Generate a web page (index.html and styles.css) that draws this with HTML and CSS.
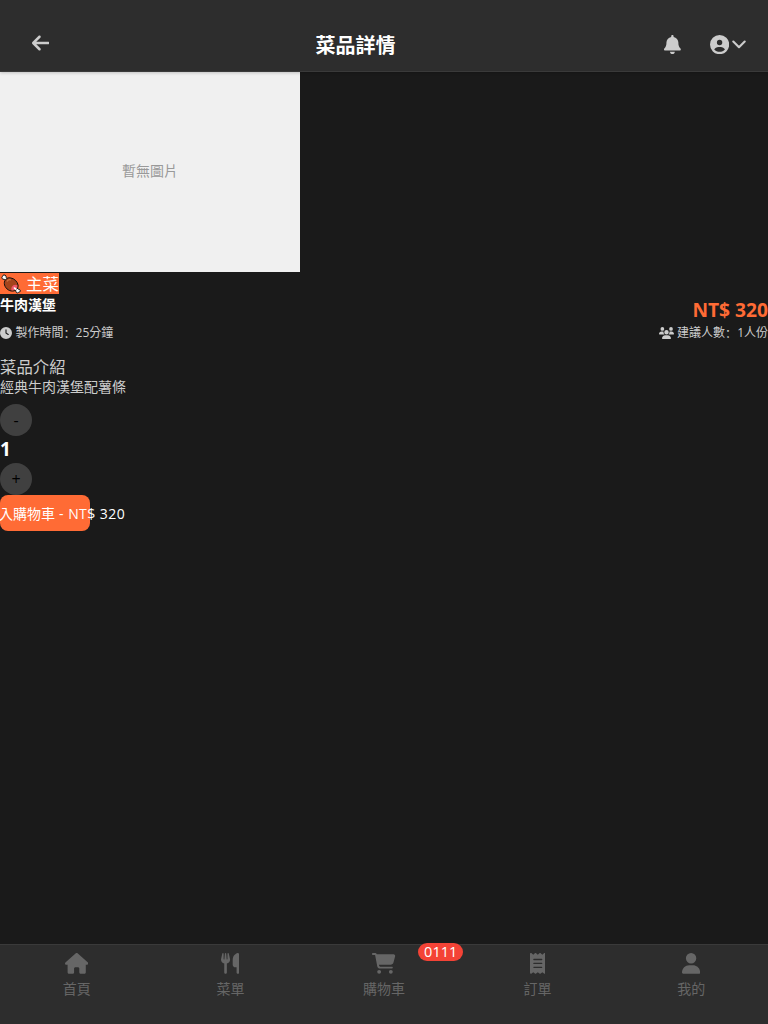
FILE: index.html
```html
<!DOCTYPE html>
<html lang="zh-Hant">
<head>
<meta charset="utf-8">
<title>菜品詳情</title>
<link rel="stylesheet" href="styles.css">
</head>
<body>
<div class="app">
  <header class="topbar">
    <svg class="back" viewBox="0 0 448 512"><path d="M9.4 233.4c-12.5 12.5-12.5 32.8 0 45.3l160 160c12.5 12.5 32.8 12.5 45.3 0s12.5-32.8 0-45.3L109.2 288 416 288c17.7 0 32-14.3 32-32s-14.3-32-32-32l-306.7 0L214.6 118.6c12.5-12.5 12.5-32.8 0-45.3s-32.8-12.5-45.3 0l-160 160z"/></svg>
    <h1 class="title">菜品詳情</h1>
    <div class="actions">
      <svg class="bell" viewBox="0 0 448 512"><path d="M224 0c-17.7 0-32 14.3-32 32l0 19.2C119 66 64 130.6 64 208l0 18.8c0 47-17.3 92.4-48.5 127.6l-7.4 8.3c-8.4 9.4-10.4 22.9-5.3 34.4S19.4 416 32 416l384 0c12.6 0 24-7.4 29.2-18.9s3.1-25-5.3-34.4l-7.4-8.3C401.3 319.2 384 273.9 384 226.8l0-18.8c0-77.4-55-142-128-156.8L256 32c0-17.7-14.3-32-32-32zm45.3 493.3c12-12 18.7-28.3 18.7-45.3l-64 0-64 0c0 17 6.7 33.3 18.7 45.3s28.3 18.7 45.3 18.7s33.3-6.7 45.3-18.7z"/></svg>
      <svg class="account" viewBox="0 0 512 512"><path d="M399 384.2C376.9 345.8 335.4 320 288 320H224c-47.4 0-88.9 25.8-111 64.2c35.2 39.2 86.2 63.8 143 63.8s107.8-24.7 143-63.8zM0 256a256 256 0 1 1 512 0A256 256 0 1 1 0 256zm256 16a72 72 0 1 0 0-144 72 72 0 1 0 0 144z"/></svg>
      <svg class="chevron" viewBox="0 0 14 9"><path d="M1.3 1.5 7 7.2l5.700-5.700"/></svg>
    </div>
  </header>

  <main class="content">
    <div class="photo">暫無圖片</div>
    <div class="tag-row"><span class="tag">
      <svg class="meat" viewBox="0 0 20 20">
        <g stroke="#111" stroke-width="1" stroke-linejoin="round">
          <path fill="#fff" d="M5.500 7.500 3.300 5.300C1.200 5.600.2 3.900 1.300 2.700 1.500.7 4.200.3 5 2c.2.700.1 1.300.1 1.300L7.400 5.600z"/>
          <path fill="#fff" d="m13 15 1.800 1.500c-.3 2.300 1.600 3 2.700 1.900 2-.1 2.400-2.300.9-3.100-.6-.3-1.300-.1-1.300-.1l-1.900-2z"/>
          <path fill="#a4441c" d="M3.300 9.500C3.100 5.800 6.400 3 9.600 3.900c3.700.5 7 3.900 7.500 7.200.4 3.300-2.200 5.800-5.300 6C7.500 17.300 3.600 13.700 3.300 9.500z"/>
        </g>
        <path fill="#ee5769" d="M10.800 16.500c-1.900-2.900 2-7.600 5.500-5.200.4 2.900-2.200 5.300-5.500 5.200z"/>
        <path fill="#fff" d="M12.500 13.800c.8-1 1.800-.5 3.500 1.300l-1.100 1.100c-1.400-.8-2.400-1.600-2.400-2.400z"/>
        <path d="M6 7.500c1-1.700 2.600-2 3.800-1.500" fill="none" stroke="#cf7648" stroke-width="1.200"/>
      </svg><span>主菜</span></span></div>
    <div class="heading">
      <h2 class="name">牛肉漢堡</h2>
      <span class="price">NT$ 320</span>
    </div>
    <div class="meta">
      <span class="fact"><svg class="clock" viewBox="0 0 512 512"><path d="M256 0a256 256 0 1 1 0 512A256 256 0 1 1 256 0zM232 120V256c0 8 4 15.500 10.700 20l96 64c11 7.400 25.900 4.400 33.300-6.700s4.400-25.900-6.700-33.300L280 243.200V120c0-13.300-10.700-24-24-24s-24 10.700-24 24z"/></svg>製作時間<span class="colon" lang="zh-Hans">：</span>25分鐘</span>
      <span class="fact"><svg class="people" viewBox="0 0 640 512"><path d="M144 0a80 80 0 1 1 0 160A80 80 0 1 1 144 0zM512 0a80 80 0 1 1 0 160A80 80 0 1 1 512 0zM0 298.700C0 239.800 47.800 192 106.700 192h42.700c15.900 0 31 3.500 44.600 9.700c-1.300 7.200-1.900 14.700-1.900 22.300c0 38.200 16.800 72.500 43.300 96c-.2 0-.4 0-.7 0H21.300C9.600 320 0 310.400 0 298.700zM405.300 320c-.2 0-.4 0-.7 0c26.600-23.500 43.300-57.800 43.300-96c0-7.600-.7-15-1.900-22.300c13.600-6.300 28.700-9.700 44.600-9.700h42.700C592.200 192 640 239.800 640 298.700c0 11.800-9.600 21.300-21.300 21.300H405.300zM224 224a96 96 0 1 1 192 0 96 96 0 1 1-192 0zM128 485.300C128 411.700 187.700 352 261.300 352H378.700C452.300 352 512 411.700 512 485.300c0 14.700-11.900 26.700-26.700 26.700H154.700c-14.700 0-26.700-11.900-26.700-26.700z"/></svg>建議人數<span class="colon" lang="zh-Hans">：</span>1人份</span>
    </div>
    <h3 class="section-title">菜品介紹</h3>
    <p class="description">經典牛肉漢堡配薯條</p>
    <button class="step">-</button>
    <div class="quantity">1</div>
    <button class="step">+</button>
    <button class="add"><span class="add-label">入購物車<span class="add-price"> - NT$ 320</span></span></button>
  </main>

  <nav class="tabs">
    <a class="tab"><svg class="w-wide" viewBox="0 0 576 512"><path d="M575.800 255.500c0 18-15 32.100-32 32.100h-32l.7 160.200c0 2.700-.2 5.400-.5 8.100V472c0 22.100-17.900 40-40 40H456c-1.100 0-2.200 0-3.300-.1c-1.400 .1-2.800 .1-4.200 .1H416 392c-22.100 0-40-17.900-40-40V448 384c0-17.700-14.300-32-32-32H256c-17.700 0-32 14.300-32 32v64 24c0 22.100-17.900 40-40 40H160 128.100c-1.500 0-3-.1-4.500-.2c-1.200 .1-2.400 .2-3.600 .2H104c-22.100 0-40-17.900-40-40V360c0-.9 0-1.900 .1-2.800V287.600H32c-18 0-32-14-32-32.100c0-9 3-17 10-24L266.400 8c7-7 15-8 22-8s15 2 21 7L564.800 231.500c8 7 12 15 11 24z"/></svg><span>首頁</span></a>
    <a class="tab"><svg viewBox="0 0 448 512"><path d="M416 0C400 0 288 32 288 176V288c0 35.300 28.700 64 64 64h32V480c0 17.700 14.300 32 32 32s32-14.300 32-32V352 240 32c0-17.700-14.300-32-32-32zM64 16C64 7.800 57.900 1 49.700 .1S34.200 4.600 32.400 12.500L2.100 148.800C.7 155.100 0 161.500 0 167.900c0 45.900 35.100 83.600 80 87.700V480c0 17.700 14.300 32 32 32s32-14.300 32-32V255.600c44.900-4.100 80-41.800 80-87.700c0-6.400-.7-12.800-2.100-19.100L191.600 12.500c-1.800-8-9.300-13.300-17.400-12.400S160 7.800 160 16V150.200c0 5.400-4.400 9.800-9.800 9.800c-5.100 0-9.300-3.900-9.800-9L127.900 14.600C127.200 6.300 120.300 0 112 0s-15.200 6.300-15.900 14.600L83.700 151c-.5 5.100-4.700 9-9.800 9c-5.400 0-9.800-4.400-9.800-9.800V16z"/></svg><span>菜單</span></a>
    <a class="tab"><svg class="w-wide" viewBox="0 0 576 512"><path d="M0 24C0 10.700 10.700 0 24 0H69.500c22 0 41.500 12.800 50.600 32h411c26.300 0 45.500 25 38.600 50.400l-41 152.300c-8.500 31.400-37 53.300-69.500 53.300H170.700l5.400 28.500c2.200 11.300 12.100 19.500 23.600 19.500H488c13.300 0 24 10.700 24 24s-10.700 24-24 24H199.700c-34.600 0-64.300-24.600-70.700-58.500L77.400 54.500c-.7-3.800-4-6.500-7.900-6.500H24C10.700 48 0 37.300 0 24zM128 464a48 48 0 1 1 96 0 48 48 0 1 1-96 0zm336-48a48 48 0 1 1 0 96 48 48 0 1 1 0-96z"/></svg><span>購物車</span><b class="badge">0111</b></a>
    <a class="tab"><svg class="w-slim" viewBox="0 0 384 512"><path d="M14 2.200C22.500-1.700 32.500-.3 39.600 5.800L80 40.400 120.400 5.800c9-7.700 22.300-7.700 31.200 0L192 40.400 232.400 5.800c9-7.700 22.300-7.700 31.200 0L304 40.400 344.400 5.800c7.100-6.100 17.100-7.500 25.600-3.600s14 12.400 14 21.800V488c0 9.400-5.500 17.900-14 21.800s-18.500 2.500-25.600-3.600L304 471.600l-40.400 34.600c-9 7.700-22.300 7.700-31.200 0L192 471.600l-40.400 34.600c-9 7.700-22.300 7.700-31.200 0L80 471.600 39.600 506.200c-7.100 6.100-17.100 7.500-25.600 3.600S0 497.400 0 488V24C0 14.600 5.500 6.100 14 2.200zM96 144c-8.800 0-16 7.200-16 16s7.200 16 16 16H288c8.800 0 16-7.200 16-16s-7.200-16-16-16H96zM80 352c0 8.800 7.200 16 16 16H288c8.800 0 16-7.200 16-16s-7.200-16-16-16H96c-8.800 0-16 7.200-16 16zM96 240c-8.800 0-16 7.200-16 16s7.200 16 16 16H288c8.800 0 16-7.200 16-16s-7.200-16-16-16H96z"/></svg><span>訂單</span></a>
    <a class="tab"><svg viewBox="0 0 448 512"><path d="M224 256A128 128 0 1 0 224 0a128 128 0 1 0 0 256zm-45.700 48C79.800 304 0 383.800 0 482.300C0 498.700 13.300 512 29.700 512H418.300c16.400 0 29.700-13.300 29.700-29.700C448 383.800 368.200 304 269.700 304H178.300z"/></svg><span>我的</span></a>
  </nav>
</div>
</body>
</html>
```

FILE: styles.css
```css
* { box-sizing: border-box; margin: 0; padding: 0; }

body {
  background: #1a1a1a;
  color: #fff;
  font-family: "Open Sans", "Noto Sans CJK TC", sans-serif;
}

svg { display: block; flex: none; fill: currentColor; }

.app { display: flex; flex-direction: column; height: 1024px; overflow: hidden; }

.topbar {
  display: flex;
  flex: none;
  align-items: flex-start;
  justify-content: space-between;
  height: 72px;
  padding: 34px 22px 0 31.5px;
  background: #2d2d2d;
  border-bottom: 1px solid #3a3a3a;
  box-shadow: 0 1px 3px rgba(0, 0, 0, .2);
  color: #ccc;
  position: relative;
}

.back { width: 17.5px; height: 20px; margin-top: -1px; }
.title { margin: -3px 0 0 -2px; color: #fff; font-size: 20px; line-height: 30px; font-weight: 700; }
.actions { display: flex; align-items: center; height: 21px; }
.bell { width: 16.8px; height: 19.2px; margin-right: 29.5px; }
.account { width: 19.2px; height: 19.2px; margin-right: 2.5px; }
.chevron { width: 14px; height: 9px; fill: none; stroke: #ccc; stroke-width: 2.1; stroke-linecap: round; stroke-linejoin: round; }

.content { flex: 1; min-height: 0; }

.photo {
  display: flex;
  align-items: center;
  justify-content: center;
  width: 300px;
  height: 200px;
  padding-bottom: 5px;
  background: #f0f0f0;
  color: #999;
  font-size: 14px;
}

.tag-row { display: flex; height: 23px; padding-top: 1px; }
.tag {
  display: flex;
  align-items: center;
  gap: 5px;
  width: 59px;
  height: 21px;
  padding-left: 1px;
  background: #ff6b35;
  font-size: 16.4px;
  line-height: 21px;
}
.meat { width: 20px; height: 20px; fill: none; }

.heading { display: flex; justify-content: space-between; height: 30px; }
.name { font-size: 14px; line-height: 20px; font-weight: 700; }
.price { color: #ff6b35; font-size: 19.2px; font-weight: 700; line-height: 30px; }

.meta { display: flex; justify-content: space-between; height: 30px; color: #ccc; font-size: 12px; line-height: 15px; }
.fact { display: flex; align-items: center; height: 15px; }
.colon { font-family: "Noto Sans CJK SC", sans-serif; }
.clock { width: 12px; height: 12px; margin-right: 3.5px; }
.people { width: 15px; height: 12px; margin-right: 3px; }

.section-title { color: #ccc; font-size: 16.4px; font-weight: 400; line-height: 24px; }
.description { height: 25px; color: #ccc; font-size: 14px; line-height: 16px; }

.step {
  display: block;
  width: 32px;
  height: 32px;
  border: 0;
  border-radius: 50%;
  background: #404040;
  color: #000;
  font: 16px/33px "Open Sans", sans-serif;
}
.quantity { height: 27px; font-size: 19px; font-weight: 700; line-height: 27px; }

.add {
  display: flex;
  align-items: center;
  width: 90px;
  height: 36px;
  padding-top: 1px;
  border: 0;
  border-radius: 8px;
  background: #ff6b35;
  color: #fff;
  font: 14px/20px "Open Sans", "Noto Sans CJK TC", sans-serif;
}
.add-label { margin-left: -1px; white-space: nowrap; }
.add-price { letter-spacing: .45px; }

.tabs {
  display: grid;
  grid-template-columns: repeat(5, 1fr);
  flex: none;
  height: 80px;
  background: #2d2d2d;
  border-top: 1px solid #3a3a3a;
  color: #666;
}
.tab {
  position: relative;
  display: flex;
  flex-direction: column;
  align-items: center;
  gap: 5px;
  padding-top: 8px;
  font-size: 14px;
  line-height: 20px;
}
.tab svg { width: 18.2px; height: 20.8px; }
.tab .w-wide { width: 23.4px; }
.tab .w-slim { width: 15.6px; }
.badge {
  position: absolute;
  top: -2px;
  left: 111px;
  width: 45px;
  height: 18px;
  border-radius: 9px;
  background: #f44336;
  color: #fff;
  font-size: 14.5px;
  font-weight: 400;
  line-height: 18px;
  text-align: center;
}
```
